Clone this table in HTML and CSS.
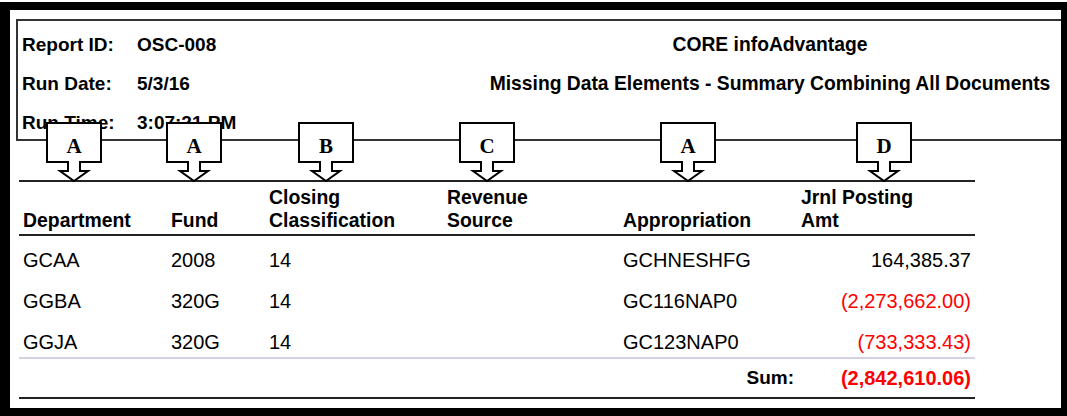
FILE: index.html
```html
<!DOCTYPE html>
<html lang="en">
<head>
<meta charset="utf-8">
<title>Missing Data Elements</title>
<link rel="stylesheet" href="styles.css">
</head>
<body>
<div class="frame">
  <header class="report-head">
    <div class="k">Report ID:</div><div class="v">OSC-008</div><div class="title">CORE infoAdvantage</div>
    <div class="k">Run Date:</div><div class="v">5/3/16</div><div class="title">Missing Data Elements - Summary Combining All Documents</div>
    <div class="k">Run Time:</div><div class="v">3:07:21 PM</div><div class="title"></div>
  </header>

  <section class="report-table">
    <div class="tr thead">
      <div>Department</div>
      <div>Fund</div>
      <div>Closing<br>Classification</div>
      <div>Revenue<br>Source</div>
      <div>Appropriation</div>
      <div>Jrnl Posting<br>Amt</div>
    </div>
    <div class="tr row">
      <div>GCAA</div><div>2008</div><div>14</div><div></div><div>GCHNESHFG</div><div class="amt">164,385.37</div>
    </div>
    <div class="tr row">
      <div>GGBA</div><div>320G</div><div>14</div><div></div><div>GC116NAP0</div><div class="amt neg">(2,273,662.00)</div>
    </div>
    <div class="tr row last">
      <div>GGJA</div><div>320G</div><div>14</div><div></div><div>GC123NAP0</div><div class="amt neg">(733,333.43)</div>
    </div>
    <div class="sum">
      <div class="sum-label">Sum:</div>
      <div class="sum-value">(2,842,610.06)</div>
    </div>
  </section>

  <div class="callout c1"><svg width="56" height="60" viewBox="0 0 56 60"><polygon points="1,1 55,1 55,40 34,40 34,49 42,49 28,59 14,49 22,49 22,40 1,40"/></svg><span class="lbl">A</span></div>
  <div class="callout c2"><svg width="56" height="60" viewBox="0 0 56 60"><polygon points="1,1 55,1 55,40 34,40 34,49 42,49 28,59 14,49 22,49 22,40 1,40"/></svg><span class="lbl">A</span></div>
  <div class="callout c3"><svg width="56" height="60" viewBox="0 0 56 60"><polygon points="1,1 55,1 55,40 34,40 34,49 42,49 28,59 14,49 22,49 22,40 1,40"/></svg><span class="lbl">B</span></div>
  <div class="callout c4"><svg width="56" height="60" viewBox="0 0 56 60"><polygon points="1,1 55,1 55,40 34,40 34,49 42,49 28,59 14,49 22,49 22,40 1,40"/></svg><span class="lbl">C</span></div>
  <div class="callout c5"><svg width="56" height="60" viewBox="0 0 56 60"><polygon points="1,1 55,1 55,40 34,40 34,49 42,49 28,59 14,49 22,49 22,40 1,40"/></svg><span class="lbl">A</span></div>
  <div class="callout c6"><svg width="56" height="60" viewBox="0 0 56 60"><polygon points="1,1 55,1 55,40 34,40 34,49 42,49 28,59 14,49 22,49 22,40 1,40"/></svg><span class="lbl">D</span></div>
</div>
</body>
</html>
```

FILE: styles.css
```css
html, body {
  margin: 0;
  padding: 0;
  background: #fff;
}

body {
  font-family: "Liberation Sans", Arial, sans-serif;
  color: #000;
}

.frame {
  position: relative;
  margin-top: 2px;
  border: solid #000;
  border-width: 8px 6px 8px 10px;
  height: 398px;
  overflow: hidden;
}

/* ---------- report header ---------- */
.report-head {
  margin: 9px 0 0 6px;
  border: 2px solid #333;
  border-right: 0;
  padding: 9px 10px 1px 4px;
  display: grid;
  grid-template-columns: 115px 1fr 562px;
  grid-auto-rows: 30px;
  row-gap: 9px;
  line-height: 30px;
  font-size: 19px;
  font-weight: bold;
  white-space: nowrap;
}

.report-head .title {
  text-align: center;
  font-size: 19.3px;
}

/* ---------- table ---------- */
.report-table {
  margin: 39px 0 0 9px;
  width: 956px;
  border-top: 2px solid #222;
  border-bottom: 2px solid #222;
}

.tr {
  display: grid;
  grid-template-columns: 148px 98px 178px 176px 178px 178px;
}

.tr > div {
  padding-left: 4px;
  white-space: nowrap;
}

.thead {
  height: 50px;
  padding-bottom: 2px;
  border-bottom: 2px solid #222;
  align-items: end;
  font-size: 19.4px;
  font-weight: bold;
  line-height: 23px;
}

.row {
  box-sizing: border-box;
  height: 41px;
  padding-top: 13px;
  font-size: 20px;
  line-height: 22px;
}

.row.last {
  border-bottom: 2px solid #d2d2e4;
}

.tr > .amt {
  text-align: right;
  padding-left: 0;
  padding-right: 4px;
}

.neg {
  color: #f00;
}

.sum {
  box-sizing: border-box;
  height: 38px;
  padding-top: 8px;
  display: grid;
  grid-template-columns: 1fr 178px;
  line-height: 22px;
  font-weight: bold;
  font-size: 19px;
}

.sum-label {
  text-align: right;
  padding-right: 3px;
}

.sum-value {
  text-align: right;
  padding-right: 4px;
  color: #f00;
  font-size: 20px;
}

/* ---------- callouts ---------- */
.callout {
  position: absolute;
  top: 112px;
  width: 56px;
  height: 60px;
}

.callout svg {
  position: absolute;
  left: 0;
  top: 0;
  overflow: visible;
}

.callout polygon {
  fill: #fff;
  stroke: #000;
  stroke-width: 2;
  stroke-linejoin: miter;
}

.callout .lbl {
  position: relative;
  display: block;
  height: 40px;
  text-align: center;
  font-family: "Liberation Serif", "Times New Roman", serif;
  font-weight: bold;
  font-size: 21px;
  line-height: 48px;
}

.c1 { left: 36px; }
.c2 { left: 156px; }
.c3 { left: 288px; }
.c4 { left: 449px; }
.c5 { left: 650px; }
.c6 { left: 846px; }
```
